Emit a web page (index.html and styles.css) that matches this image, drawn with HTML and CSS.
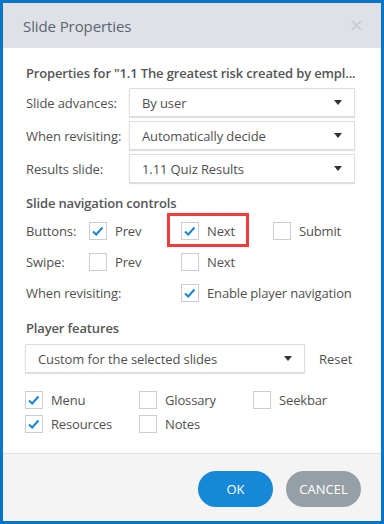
FILE: index.html
```html
<!DOCTYPE html>
<html>
<head>
<meta charset="utf-8">
<link rel="stylesheet" href="styles.css">
</head>
<body>
<div class="dialog">
  <div class="header">
    <span class="title">Slide Properties</span>
    <svg class="close" width="11" height="11" viewBox="0 0 11 11"><path d="M1 1L10 10M10 1L1 10" stroke="#c9ccd0" stroke-width="1.8"/></svg>
  </div>
  <div class="body">
    <div class="heading h1">Properties for "1.1 The greatest risk created by empl...</div>
    <div class="field">
      <span class="label">Slide advances:</span>
      <div class="select"><span>By user</span><span class="arrow"></span></div>
    </div>
    <div class="field">
      <span class="label">When revisiting:</span>
      <div class="select"><span>Automatically decide</span><span class="arrow"></span></div>
    </div>
    <div class="field">
      <span class="label">Results slide:</span>
      <div class="select"><span>1.11 Quiz Results</span><span class="arrow"></span></div>
    </div>

    <div class="heading h2">Slide navigation controls</div>
    <div class="nav">
      <span class="nlabel">Buttons:</span>
      <label class="cb"><span class="box checked"><svg width="18" height="18" viewBox="0 0 18 18"><path d="M4 9.5L7.2 12.5L13.5 5.5" fill="none" stroke="#1a84d6" stroke-width="2"/></svg></span>Prev</label>
      <label class="cb highlight"><span class="box checked"><svg width="18" height="18" viewBox="0 0 18 18"><path d="M4 9.5L7.2 12.5L13.5 5.5" fill="none" stroke="#1a84d6" stroke-width="2"/></svg></span>Next</label>
      <label class="cb"><span class="box"></span>Submit</label>

      <span class="nlabel">Swipe:</span>
      <label class="cb"><span class="box"></span>Prev</label>
      <label class="cb"><span class="box"></span>Next</label>
      <span></span>

      <span class="nlabel span2">When revisiting:</span>
      <label class="cb span2"><span class="box checked"><svg width="18" height="18" viewBox="0 0 18 18"><path d="M4 9.5L7.2 12.5L13.5 5.5" fill="none" stroke="#1a84d6" stroke-width="2"/></svg></span>Enable player navigation</label>
    </div>

    <div class="heading h3">Player features</div>
    <div class="pf-row">
      <div class="select wide"><span>Custom for the selected slides</span><span class="arrow"></span></div>
      <span class="reset">Reset</span>
    </div>
    <div class="features">
      <label class="cb"><span class="box checked"><svg width="18" height="18" viewBox="0 0 18 18"><path d="M4 9.5L7.2 12.5L13.5 5.5" fill="none" stroke="#1a84d6" stroke-width="2"/></svg></span>Menu</label>
      <label class="cb"><span class="box"></span>Glossary</label>
      <label class="cb"><span class="box"></span>Seekbar</label>
      <label class="cb"><span class="box checked"><svg width="18" height="18" viewBox="0 0 18 18"><path d="M4 9.5L7.2 12.5L13.5 5.5" fill="none" stroke="#1a84d6" stroke-width="2"/></svg></span>Resources</label>
      <label class="cb"><span class="box"></span>Notes</label>
    </div>
  </div>
  <div class="footer">
    <button class="btn ok">OK</button>
    <button class="btn cancel">CANCEL</button>
  </div>
</div>
</body>
</html>
```
FILE: styles.css
```css
html, body {
  margin: 0;
  padding: 0;
}
body {
  font-family: "Open Sans", "Noto Sans", sans-serif;
  color: #505050;
  font-size: 13px;
}
.dialog {
  width: 384px;
  height: 524px;
  box-sizing: border-box;
  border: 3px solid #0b74c4;
  display: flex;
  flex-direction: column;
  background: #fff;
}
.header {
  height: 45px;
  flex: none;
  background: #dee2e6;
  display: flex;
  align-items: center;
  justify-content: space-between;
  padding: 0 19px 0 20px;
}
.title {
  font-size: 15px;
  color: #5b6570;
  letter-spacing: -0.1px;
}
.close {
  display: block;
}
.body {
  flex: 1;
  padding: 16px 26px 0 23px;
}
.heading {
  font-weight: 600;
  color: #555;
  line-height: 18px;
  font-size: 13px;
  letter-spacing: -0.15px;
  white-space: nowrap;
}
.h1 { margin-bottom: 6px; }
.field {
  display: flex;
  align-items: center;
  margin-bottom: 4px;
}
.label {
  width: 103px;
  flex: none;
  letter-spacing: -0.1px;
}
.select {
  flex: 1;
  height: 29px;
  box-sizing: border-box;
  border: 1px solid #dadee2;
  box-shadow: 0 1px 1px rgba(0,0,0,0.12);
  display: flex;
  align-items: center;
  justify-content: space-between;
  padding: 0 12px 0 12px;
  color: #4f4f4f;
  letter-spacing: -0.1px;
}
.arrow {
  width: 0;
  height: 0;
  border-left: 4px solid transparent;
  border-right: 4px solid transparent;
  border-top: 5px solid #333;
}
.h2 { margin-top: 11px; }
.nav {
  display: grid;
  grid-template-columns: 63px 92px 92px auto;
  grid-auto-rows: 31px;
  align-items: center;
  margin-top: 3px;
}
.nlabel { letter-spacing: -0.1px; }
.span2 { grid-column: span 2; }
.nav .cb.span2 { grid-column: 3 / span 2; }
.cb {
  display: flex;
  align-items: center;
  gap: 8px;
  white-space: nowrap;
  letter-spacing: -0.15px;
  position: relative;
}
.box {
  width: 18px;
  height: 18px;
  box-sizing: border-box;
  border: 1px solid #c7ced5;
  flex: none;
  position: relative;
  background: #fff;
}
.box svg {
  position: absolute;
  left: -1px;
  top: -1px;
}
.highlight::before {
  content: "";
  position: absolute;
  left: -14px;
  top: -9px;
  width: 76px;
  height: 28px;
  border: 3px solid #f03c3c;
}
.h3 { margin-top: 11px; }
.pf-row {
  display: flex;
  align-items: center;
  margin-top: 7px;
  margin-left: -1px;
}
.select.wide {
  flex: none;
  width: 280px;
}
.reset {
  margin-left: 14px;
}
.features {
  display: grid;
  grid-template-columns: 114px 114px auto;
  grid-auto-rows: 24px;
  row-gap: 0;
  align-items: center;
  margin-top: 15px;
  margin-left: -1px;
}
.footer {
  height: 68px;
  flex: none;
  box-sizing: border-box;
  border-top: 1px solid #dfe1e3;
  background: #f4f4f4;
  display: flex;
  justify-content: flex-end;
  align-items: flex-start;
  padding: 17px 20px 0 0;
  gap: 13px;
}
.btn {
  width: 75px;
  height: 36px;
  border: none;
  border-radius: 18px;
  color: #fff;
  font-family: "Open Sans", "Noto Sans", sans-serif;
  font-size: 13px;
  padding: 0;
}
.ok { background: #1787d8; }
.cancel { background: #979fa6; }
```
